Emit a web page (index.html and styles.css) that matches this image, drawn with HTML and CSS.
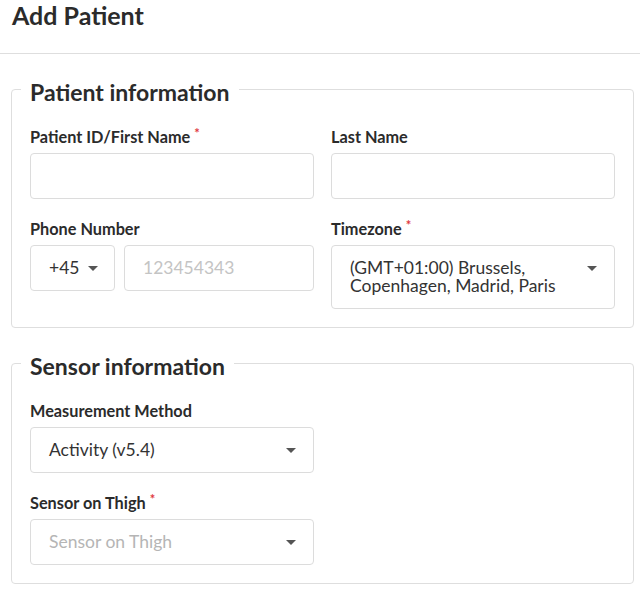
FILE: index.html
```html
<!DOCTYPE html>
<html lang="en">
<head>
<meta charset="utf-8">
<title>Add Patient</title>
<link rel="stylesheet" href="styles.css">
</head>
<body>
<header class="page-header">
  <h1 class="page-title">Add Patient</h1>
</header>
<main class="page-body">
  <fieldset class="section">
    <legend class="section-title">Patient information</legend>
    <div class="grid">
      <div class="field">
        <label class="label">Patient ID/First Name<span class="req">*</span></label>
        <div class="control"></div>
      </div>
      <div class="field">
        <label class="label">Last Name</label>
        <div class="control"></div>
      </div>
      <div class="field">
        <label class="label">Phone Number</label>
        <div class="phone">
          <div class="control select code"><span class="value">+45</span><span class="caret"></span></div>
          <div class="control number"><span class="placeholder">123454343</span></div>
        </div>
      </div>
      <div class="field">
        <label class="label">Timezone<span class="req">*</span></label>
        <div class="control select"><span class="value">(GMT+01:00) Brussels, Copenhagen, Madrid, Paris</span><span class="caret"></span></div>
      </div>
    </div>
  </fieldset>
  <fieldset class="section">
    <legend class="section-title">Sensor information</legend>
    <div class="grid">
      <div class="field col1">
        <label class="label">Measurement Method</label>
        <div class="control select"><span class="value">Activity (v5.4)</span><span class="caret"></span></div>
      </div>
      <div class="field col1">
        <label class="label">Sensor on Thigh<span class="req">*</span></label>
        <div class="control select"><span class="placeholder">Sensor on Thigh</span><span class="caret"></span></div>
      </div>
    </div>
  </fieldset>
</main>
</body>
</html>
```

FILE: styles.css
```css
* { box-sizing: border-box; }
html, body { margin: 0; padding: 0; background: #fff; }
body {
  font-family: Lato, "Open Sans", sans-serif;
  color: #2b2b2b;
}
.page-header {
  height: 54px;
  border-bottom: 1px solid #dedede;
  padding: 0 12px;
}
.page-title {
  margin: 0;
  font-size: 25px;
  line-height: 30px;
  font-weight: 700;
  color: #2b2b2b;
}
.page-body {
  padding: 0 6px 0 11px;
}
.section {
  margin: 19px 0 0;
  border: 1px solid #dedede;
  border-radius: 4px;
  padding: 22px 18px 18px;
  min-width: 0;
}
.section-title {
  font-size: 23px;
  line-height: 26px;
  font-weight: 700;
  padding: 6px 9px 0;
  margin-left: -9px;
  color: #2b2b2b;
}
.grid {
  display: grid;
  grid-template-columns: 1fr 1fr;
  column-gap: 17px;
  row-gap: 20px;
}
.col1 { grid-column: 1; }
.field { display: flex; flex-direction: column; min-width: 0; }
.label {
  font-size: 16.3px;
  line-height: 20px;
  font-weight: 700;
  color: #2b2b2b;
  margin-bottom: 6px;
}
.req {
  color: #e0393e;
  font-size: 13px;
  font-weight: 700;
  vertical-align: 5px;
  line-height: 0;
  margin-left: 4px;
}
.control {
  min-height: 46px;
  border: 1px solid #dcdcdc;
  border-radius: 4px;
  padding: 13px 17px 13px 18px;
  font-size: 17.5px;
  line-height: 18px;
  color: #333;
  display: flex;
  align-items: flex-start;
  background: #fff;
}
.select .value, .select .placeholder { flex: 1; min-width: 0; }
.placeholder { color: #c4c4c4; }
.select .placeholder { color: #b5b5b5; }
.caret {
  flex: none;
  width: 0;
  height: 0;
  margin-top: 7px;
  margin-left: 20px;
  border-left: 5px solid transparent;
  border-right: 5px solid transparent;
  border-top: 5px solid #555;
}
.phone { display: flex; gap: 9px; }
.code { width: 85px; flex: none; }
.code .value { flex: none; margin-right: 9px; }
.code .caret { margin-left: 0; }
.number { flex: 1; min-width: 0; }
```
